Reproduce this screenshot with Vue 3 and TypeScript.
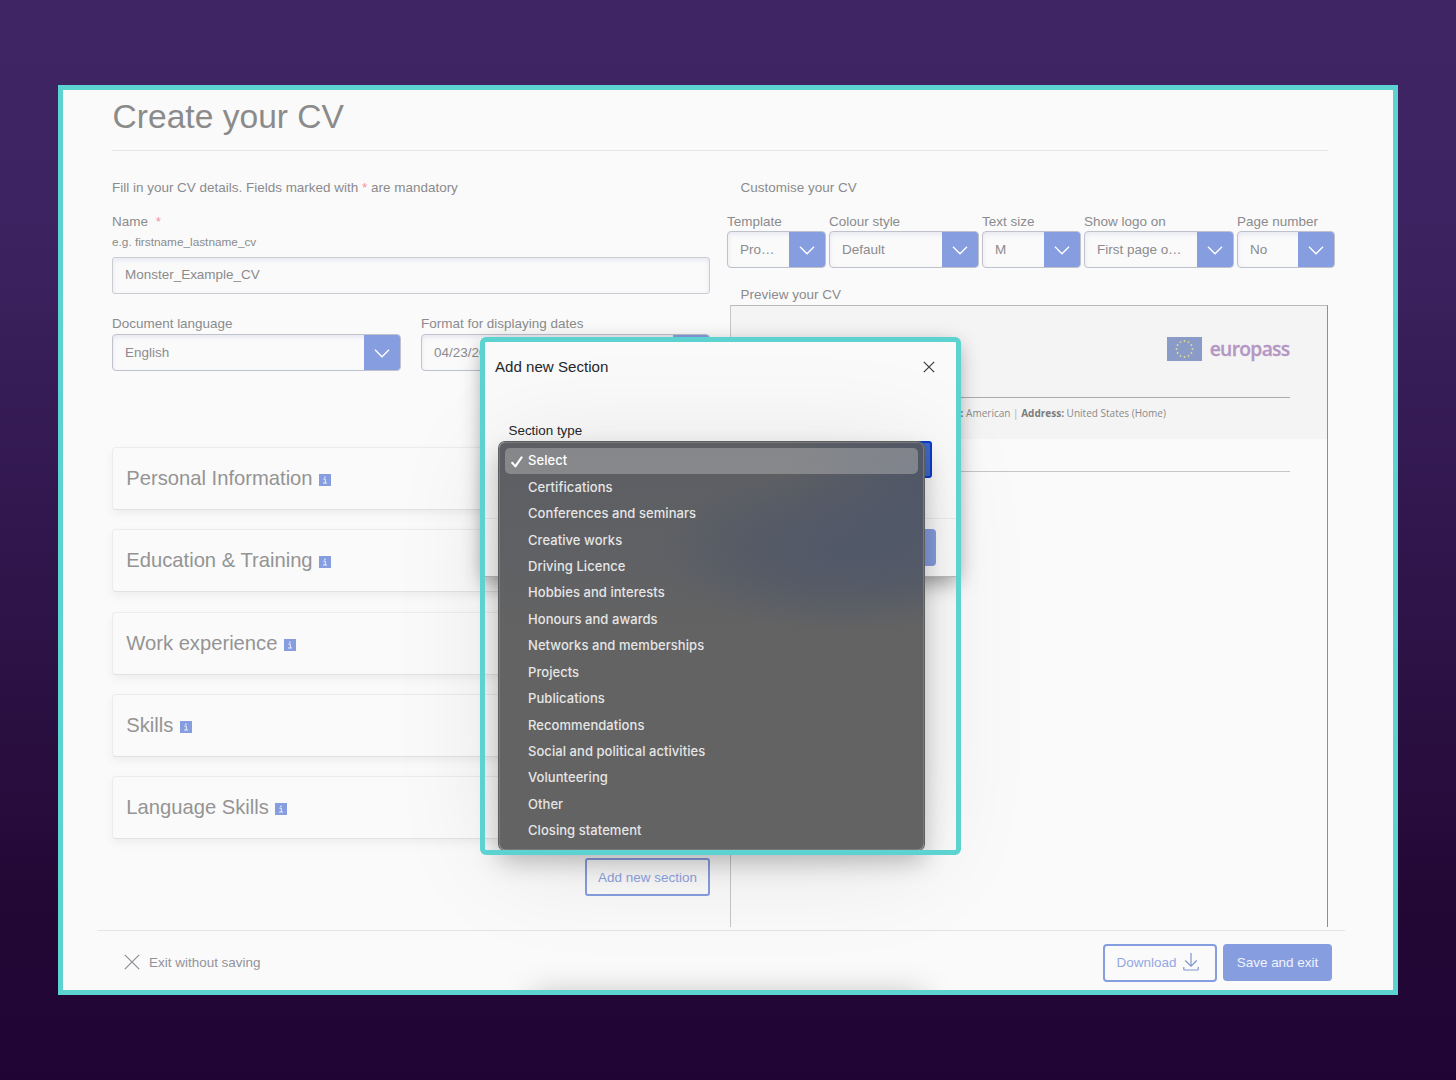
<script setup lang="ts">
interface Choice {
  label: string
  value: string
  width: number
}

const styleChoices: Choice[] = [
  { label: 'Template', value: 'Pro…', width: 99 },
  { label: 'Colour style', value: 'Default', width: 150 },
  { label: 'Text size', value: 'M', width: 99 },
  { label: 'Show logo on', value: 'First page o…', width: 150 },
  { label: 'Page number', value: 'No', width: 98 },
]

const languageChoices: Choice[] = [
  { label: 'Document language', value: 'English', width: 289 },
  { label: 'Format for displaying dates', value: '04/23/2023', width: 289 },
]

const cards: string[] = [
  'Personal Information',
  'Education & Training',
  'Work experience',
  'Skills',
  'Language Skills',
]

const sectionTypes: string[] = [
  'Select',
  'Certifications',
  'Conferences and seminars',
  'Creative works',
  'Driving Licence',
  'Hobbies and interests',
  'Honours and awards',
  'Networks and memberships',
  'Projects',
  'Publications',
  'Recommendations',
  'Social and political activities',
  'Volunteering',
  'Other',
  'Closing statement',
]

const stars = Array.from({ length: 12 }, (_, i) => {
  const a = (i * Math.PI) / 6
  return { x: 17.5 + 8 * Math.sin(a), y: 12 - 8 * Math.cos(a) }
})
</script>

<template>
  <div class="stage">
    <div class="frame">
      <h1>Create your CV</h1>

      <div class="columns">
        <section class="left">
          <p class="line">Fill in your CV details. Fields marked with <i>*</i> are mandatory</p>
          <div class="line name">Name <i>*</i></div>
          <div class="hint">e.g. firstname_lastname_cv</div>
          <div class="input">Monster_Example_CV</div>
          <div class="lang-row">
            <div v-for="c in languageChoices" :key="c.label" class="field" :style="{ width: c.width + 'px' }">
              <div class="line label">{{ c.label }}</div>
              <div class="select">
                <span>{{ c.value }}</span>
                <b><svg width="16" height="9" viewBox="0 0 16 9"><path d="M1 .8 8 7.8 15 .8" /></svg></b>
              </div>
            </div>
          </div>
          <div class="cards">
            <div v-for="card in cards" :key="card" class="card">
              {{ card }}
              <svg class="info" width="12" height="12" viewBox="0 0 12 12">
                <rect width="12" height="12" fill="#869de0" />
                <path d="M4.3 5.1H6.3V8.8M4.1 9H8" fill="none" stroke="#eef1fb" stroke-width="1" />
                <rect x="5.3" y="2.6" width="1.3" height="1.3" fill="#eef1fb" />
              </svg>
            </div>
          </div>
          <div class="add">Add new section</div>
        </section>

        <section class="right">
          <p class="line inset">Customise your CV</p>
          <div class="style-row">
            <div v-for="c in styleChoices" :key="c.label" class="field" :style="{ width: c.width + 'px' }">
              <div class="line label">{{ c.label }}</div>
              <div class="select">
                <span>{{ c.value }}</span>
                <b><svg width="16" height="9" viewBox="0 0 16 9"><path d="M1 .8 8 7.8 15 .8" /></svg></b>
              </div>
            </div>
          </div>
          <p class="line inset preview-label">Preview your CV</p>
          <div class="preview">
            <div class="preview-head">
              <div class="brand">
                <svg width="35" height="24" viewBox="0 0 35 24">
                  <rect width="35" height="24" fill="#899bc6" />
                  <circle v-for="(s, i) in stars" :key="i" :cx="s.x" :cy="s.y" r=".9" fill="#e0dd98" />
                </svg>
                <span>europass</span>
              </div>
              <div class="facts"><strong>Nationality:</strong> American <em>|</em> <strong>Address:</strong> United States (Home)</div>
            </div>
            <div class="preview-rule"></div>
          </div>
        </section>
      </div>

      <footer>
        <div class="exit">
          <svg width="16" height="16" viewBox="0 0 16 16"><path d="M.8.8 15.2 15.2M15.2.8.8 15.2" /></svg>
          Exit without saving
        </div>
        <div class="download">
          Download
          <svg width="16" height="18" viewBox="0 0 16 18"><path d="M8 0V13M2.2 7.5 8 13.2 13.8 7.5M.8 14V16.2Q.8 17 1.6 17H14.4Q15.2 17 15.2 16.2V14" /></svg>
        </div>
        <div class="save">Save and exit</div>
      </footer>

      <div class="bottom-shade"></div>

      <div class="overlay">
        <div class="modal">
          <header>
            <span>Add new Section</span>
            <svg width="12" height="12" viewBox="0 0 12 12"><path d="M.8.8 11.2 11.2M11.2.8.8 11.2" /></svg>
          </header>
          <div class="modal-body">
            <div class="modal-label">Section type</div>
            <div class="modal-select"></div>
          </div>
          <div class="modal-foot"><div class="modal-save"></div></div>
        </div>
        <ul class="menu">
          <li v-for="(item, i) in sectionTypes" :key="item" :class="{ on: i === 0 }">
            <svg v-if="i === 0" class="tick" width="12" height="12" viewBox="0 0 12 12"><path d="M1.2 6.8 4.4 10.4 10.6 1.4" /></svg>
            <span>{{ item }}</span>
          </li>
        </ul>
        <div class="outline"></div>
      </div>
    </div>
  </div>
</template>

<style>
body {
  margin: 0;
  background: #200434;
}
</style>

<style scoped>
* {
  box-sizing: border-box;
}
.stage {
  width: 1456px;
  height: 1080px;
  padding: 85px 58px;
  background: linear-gradient(180deg, #3f2564 0%, #3d2361 20%, #230836 83%, #200434 100%);
  font: 13.48px 'Liberation Sans', Arial, sans-serif;
  color: #8b8b8d;
}
.frame {
  position: relative;
  display: flex;
  flex-direction: column;
  width: 1340px;
  height: 910px;
  border: 5px solid #5cd3d0;
  background: #fafafa;
  overflow: hidden;
}
h1 {
  margin: 0 0 0 49px;
  width: 1216px;
  height: 61px;
  padding: 7px 0 0 0.6px;
  border-bottom: 1px solid #e6e6e6;
  font-size: 33.6px;
  font-weight: 400;
  line-height: 40px;
  color: #8b8b8b;
}
.columns {
  display: flex;
  height: 779px;
  padding: 27px 0 0 49px;
  gap: 17px;
}
.left {
  width: 598px;
}
.right {
  width: 608px;
}
.line {
  margin: 0;
  line-height: 20px;
  white-space: nowrap;
}
i {
  color: #f2929f;
  font-style: normal;
}
.name {
  margin-top: 14px;
}
.name i {
  margin-left: 4px;
}
.hint {
  line-height: 20px;
  font-size: 11.8px;
}
.input {
  height: 37px;
  margin-top: 5px;
  padding-left: 12px;
  border: 1.5px solid #cbccd2;
  border-radius: 3px;
  box-shadow: inset 0 2px 5px rgba(90, 100, 190, 0.13);
  line-height: 33px;
}
.lang-row {
  display: flex;
  justify-content: space-between;
  margin-top: 20px;
}
.style-row {
  display: flex;
  gap: 3px;
  margin-top: 14px;
}
.style-row .line {
  height: 19px;
}
.select {
  display: flex;
  height: 37px;
  border: 1px solid #bfc1cb;
  border-radius: 4px;
  overflow: hidden;
  box-shadow: inset 0 2px 5px rgba(90, 100, 190, 0.13);
}
.select span {
  flex: 1;
  padding-left: 12px;
  line-height: 35px;
  white-space: nowrap;
}
.select b {
  display: flex;
  align-items: center;
  justify-content: center;
  width: 36px;
  padding-top: 2px;
  background: #869de0;
}
.select path {
  fill: none;
  stroke: #fff;
  stroke-width: 1.4;
}
.cards {
  display: flex;
  flex-direction: column;
  gap: 19.3px;
  margin-top: 76px;
}
.card {
  display: flex;
  align-items: center;
  height: 63px;
  padding-left: 13.3px;
  border: 1px solid #ececec;
  border-bottom-color: #e2e2e2;
  border-radius: 4px;
  box-shadow: 0 4px 10px rgba(0, 0, 0, 0.05);
  background: #fafafa;
  font-size: 20.2px;
  color: #949494;
}
.info {
  margin: 3px 0 0 6.6px;
}
.add {
  width: 125px;
  height: 38px;
  margin: 18.5px 0 0 auto;
  border: 2px solid #869de0;
  border-radius: 3px;
  line-height: 35px;
  text-align: center;
  color: #8fa4e2;
}
.inset {
  padding-left: 13.6px;
}
.preview-label {
  margin-top: 17px;
}
.preview {
  width: 598px;
  height: 622px;
  margin-left: 3px;
  border: solid #b9b9b9;
  border-width: 1px 1.5px 0 1.5px;
  border-right-color: #8e8e8e;
  border-left-color: #c6c6c6;
}
.preview-head {
  height: 133px;
  padding: 31px 37.5px 0;
  background: #f4f4f4;
}
.brand {
  display: flex;
  justify-content: flex-end;
  height: 61px;
  border-bottom: 1px solid #acacac;
}
.brand span {
  margin-left: 7.5px;
  font: 600 19.3px/24px 'Open Sans', 'Noto Sans', sans-serif;
  letter-spacing: -0.7px;
  color: #b597c4;
  -webkit-text-stroke: 0.3px #b597c4;
}
.facts {
  padding-left: 135.5px;
  font: 10.03px/30px 'Open Sans', 'Noto Sans', sans-serif;
  color: #8a8a8a;
  white-space: nowrap;
}
.facts em {
  font-style: normal;
  color: #aaa;
}
.facts strong {
  color: #7c7c7c;
}
.preview-rule {
  margin: 31.5px 37.5px 0;
  border-top: 1px solid #c6c6c6;
}
footer {
  display: flex;
  align-items: flex-start;
  width: 1248px;
  height: 60px;
  margin-left: 34px;
  padding-top: 13px;
  border-top: 1px solid #e4e4e4;
}
.exit {
  display: flex;
  align-items: center;
  height: 36px;
  margin: 0 auto 0 27px;
  color: #92929a;
}
.exit svg {
  margin-right: 9px;
}
.exit path,
.download path {
  fill: none;
  stroke: #8e8e94;
  stroke-width: 1.2;
}
.download {
  display: flex;
  align-items: center;
  width: 114px;
  height: 38px;
  margin-right: 6px;
  padding: 0 0 2px 11.5px;
  border: 2px solid #869de0;
  border-radius: 4px;
  color: #93a7e3;
}
.download svg {
  margin-left: 7px;
}
.download path {
  stroke: #8095cf;
}
.save {
  width: 109px;
  height: 37px;
  margin-right: 13px;
  border-radius: 4px;
  background: #869de0;
  line-height: 37px;
  text-align: center;
  color: #f1f3fb;
}
.bottom-shade {
  position: absolute;
  left: 475px;
  top: 910px;
  width: 380px;
  height: 20px;
  box-shadow: 0 0 32px 5px rgba(0, 0, 0, 0.26);
}
.overlay {
  position: absolute;
  left: 417px;
  top: 247px;
  width: 481px;
  height: 518px;
}
.modal {
  position: absolute;
  left: 4px;
  top: 4px;
  width: 473px;
  height: 236px;
  background: #fafafa;
  border-bottom: 1px solid #bbb;
  box-shadow: 0 5px 20px rgba(0, 0, 0, 0.42);
  color: #26272b;
}
.modal header {
  display: flex;
  align-items: center;
  justify-content: space-between;
  height: 52px;
  padding: 0 22px 0 11px;
  font-size: 15.1px;
}
.modal header span {
  padding-bottom: 2px;
}
.modal header path {
  stroke: #3a3a3a;
  stroke-width: 1.2;
}
.modal-body {
  height: 126px;
  padding: 28px 25px 0 24.5px;
  border-bottom: 1px solid #ececec;
}
.modal-label {
  height: 20px;
  line-height: 20px;
  font-size: 13.4px;
}
.modal-select {
  height: 37px;
  border: 2px solid #0a3ccb;
  border-radius: 3px;
  background: #4169c9;
}
.modal-foot {
  padding: 10px 21px 0;
}
.modal-save {
  width: 90px;
  height: 37px;
  margin-left: auto;
  border-radius: 4px;
  background: #869de0;
}
.menu {
  position: absolute;
  left: 19px;
  top: 105px;
  width: 425px;
  height: 408px;
  margin: 0;
  padding: 5px 5px 0;
  list-style: none;
  border: 1px solid #777879;
  border-radius: 6px;
  background:
    radial-gradient(ellipse 190px 80px at 345px 108px, rgba(76, 85, 105, 0.75), rgba(76, 85, 105, 0.5) 50%, transparent),
    radial-gradient(ellipse 140px 140px at 425px 30px, rgba(72, 82, 104, 0.65), transparent),
    linear-gradient(180deg, #5c5e63 0, #606164 120px, #636363 190px);
  box-shadow:
    0 0 0 1px #5c5e60,
    0 12px 24px rgba(0, 0, 0, 0.24),
    0 10px 110px rgba(0, 0, 0, 0.1);
  font: 500 13px/26.43px Inter, Roboto, sans-serif;
  letter-spacing: 0.06px;
  color: #e6e6e6;
}
.menu li {
  position: relative;
  display: flex;
  height: 26.43px;
  padding-left: 23px;
}
.menu li span {
  margin-top: -0.7px;
}
.menu .on {
  border-radius: 5px;
  background: rgba(190, 190, 190, 0.44);
  color: #fff;
}
.tick {
  position: absolute;
  left: 6px;
  top: 8px;
}
.tick path {
  fill: none;
  stroke: #fff;
  stroke-width: 2.1;
  stroke-linecap: round;
  stroke-linejoin: round;
}
.outline {
  position: absolute;
  inset: 0;
  border: 5px solid #5cd3d0;
  border-radius: 6px;
}
</style>
